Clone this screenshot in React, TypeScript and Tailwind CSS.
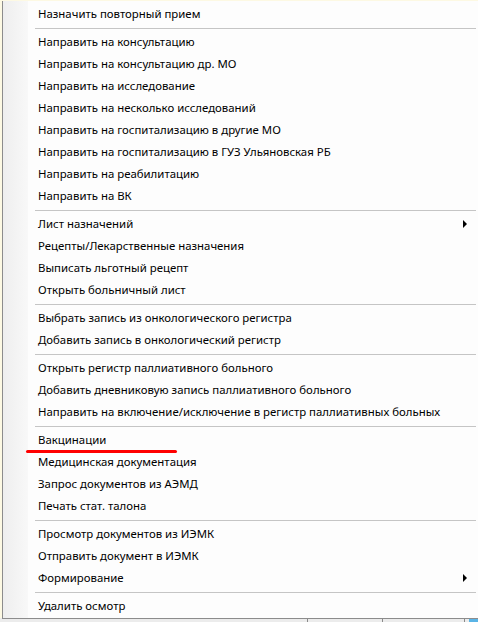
import React from "react";

type Entry = { t: string; sub?: boolean } | "sep";

const entries: Entry[] = [
  { t: "Назначить повторный прием" },
  "sep",
  { t: "Направить на консультацию" },
  { t: "Направить на консультацию др. МО" },
  { t: "Направить на исследование" },
  { t: "Направить на несколько исследований" },
  { t: "Направить на госпитализацию в другие МО" },
  { t: "Направить на госпитализацию в ГУЗ Ульяновская РБ" },
  { t: "Направить на реабилитацию" },
  { t: "Направить на ВК" },
  "sep",
  { t: "Лист назначений", sub: true },
  { t: "Рецепты/Лекарственные назначения" },
  { t: "Выписать льготный рецепт" },
  { t: "Открыть больничный лист" },
  "sep",
  { t: "Выбрать запись из онкологического регистра" },
  { t: "Добавить запись в онкологический регистр" },
  "sep",
  { t: "Открыть регистр паллиативного больного" },
  { t: "Добавить дневниковую запись паллиативного больного" },
  { t: "Направить на включение/исключение в регистр паллиативных больных" },
  "sep",
  { t: "Вакцинации" },
  { t: "Медицинская документация" },
  { t: "Запрос документов из АЭМД" },
  { t: "Печать стат. талона" },
  "sep",
  { t: "Просмотр документов из ИЭМК" },
  { t: "Отправить документ в ИЭМК" },
  { t: "Формирование", sub: true },
  "sep",
  { t: "Удалить осмотр" },
];

export default function App() {
  return (
    <div
      className="relative w-[478px] h-[622px] overflow-hidden bg-[#fdf9e3]"
      style={{ fontFamily: '"Noto Sans", "Open Sans", sans-serif' }}
    >
      {/* background strip at bottom */}
      <div className="absolute left-0 right-0 bottom-0 h-[4px] bg-[#ececec] flex">
        <div className="w-[308px] border-r border-[#8a8a8a]" />
        <div className="w-[75px] border-r border-[#8a8a8a]" />
        <div className="w-[82px] border-r border-[#8a8a8a]" />
        <div className="flex-1 bg-[#5ab4e6] ml-[4px]" />
      </div>
      {/* menu */}
      <div className="absolute left-[2px] top-[1px] w-[480px] h-[618px] border-l border-b border-[#8c8c8c] bg-[#fdfdfd] pt-[2px]">
        <div className="absolute left-0 top-0 bottom-0 w-[25px] bg-gradient-to-r from-[#eeeeee] to-[#f8f8f8]" />
        <div className="relative flex flex-col">
          {entries.map((e, i) =>
            e === "sep" ? (
              <div key={i} className="h-[6px] pt-[3px] pl-[32px] pr-[4px]">
                <div className="h-px bg-[#c5c5c5] w-[441px]" />
              </div>
            ) : (
              <div
                key={i}
                className="relative h-[22px] flex items-center pl-[35px] text-[11.4px] text-black leading-none"
              >
                <span>{e.t}</span>
                {e.sub && (
                  <svg
                    className="absolute left-[460px] top-[7px]"
                    width="5"
                    height="8"
                    viewBox="0 0 5 8"
                  >
                    <path d="M0 0 L4 4 L0 8 Z" fill="#000" />
                  </svg>
                )}
              </div>
            )
          )}
        </div>
      </div>
      {/* red annotation underline */}
      <div className="absolute left-[26px] top-[450px] w-[151px] h-[2.5px] bg-[#ff0000] rounded-full" />
    </div>
  );
}
